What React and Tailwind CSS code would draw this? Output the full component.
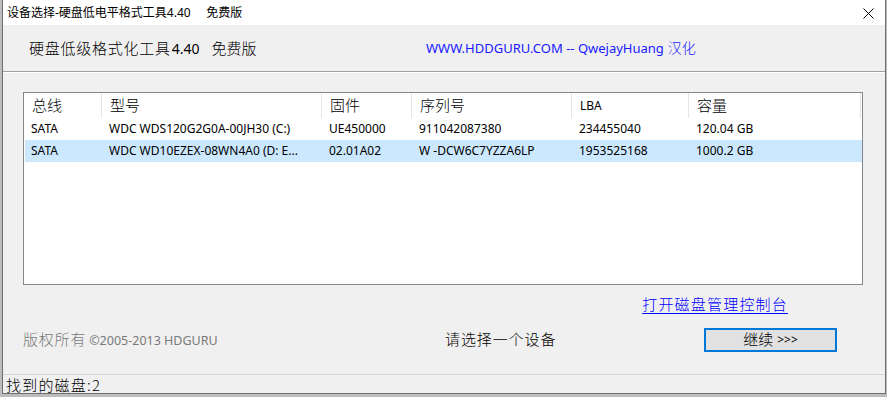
import React from "react";

const CJK = { fontFamily: "'Noto Sans CJK SC', sans-serif", fontWeight: 300 };
const LAT = { fontFamily: "'Noto Sans', 'Noto Sans CJK SC', sans-serif" };

const cols = [
  { w: 78, h: "总线", cjk: true },
  { w: 220, h: "型号", cjk: true },
  { w: 90, h: "固件", cjk: true },
  { w: 160, h: "序列号", cjk: true },
  { w: 117, h: "LBA", cjk: false },
  { w: 172, h: "容量", cjk: true },
];

const rows = [
  ["SATA", "WDC WDS120G2G0A-00JH30 (C:)", "UE450000", "911042087380", "234455040", "120.04 GB"],
  ["SATA", "WDC WD10EZEX-08WN4A0 (D: E...", "02.01A02", "W -DCW6C7YZZA6LP", "1953525168", "1000.2 GB"],
];

export default function App() {
  return (
    <div className="w-[887px] h-[397px] bg-[#bdbdbd] overflow-hidden pl-[2px]">
      <div className="w-[884px] h-[394px] flex flex-col border-x border-b border-[#6e6e6e] bg-[#f0f0f0]">
        {/* title bar */}
        <div className="h-[25px] bg-white flex items-center justify-between pl-[4px] pr-[11px] shrink-0">
          <div className="text-[12px] text-black whitespace-pre leading-none" style={LAT}>
            设备选择-硬盘低电平格式工具4.40     免费版
          </div>
          <svg width="11" height="11" viewBox="0 0 11 11" className="mt-[1px]">
            <path d="M0.5 0.5 L10.5 10.5 M10.5 0.5 L0.5 10.5" stroke="#000" strokeWidth="1" />
          </svg>
        </div>
        {/* heading */}
        <div className="h-[46px] flex items-center pl-[26px] shrink-0">
          <div className="flex items-baseline w-[397px]">
            <span className="text-[15px] tracking-[0.75px] text-black" style={CJK}>硬盘低级格式化工具</span>
            <span className="text-[14px] text-black ml-[1px]" style={LAT}>4.40</span>
            <span className="text-[15px] text-black ml-[12px]" style={CJK}>免费版</span>
          </div>
          <div className="flex items-baseline text-[#1a1aff]">
            <span className="text-[13px]" style={LAT}>WWW.HDDGURU.COM -- QwejayHuang</span>
            <span className="text-[14px] ml-[4px]" style={CJK}>汉化</span>
          </div>
        </div>
        <div className="h-[1px] bg-[#a0a0a0] shrink-0" />
        <div className="h-[1px] bg-white shrink-0" />
        {/* list */}
        <div className="ml-[20px] mt-[19px] w-[840px] h-[193px] border border-[#828790] bg-white shrink-0">
          <div className="flex h-[25px]">
            {cols.map((c, i) => (
              <div
                key={i}
                className="h-full flex items-center pl-[8px] border-r border-[#e5e5e5] text-black"
                style={{ width: c.w }}
              >
                {c.cjk ? (
                  <span className="text-[15px]" style={CJK}>{c.h}</span>
                ) : (
                  <span className="text-[12px]" style={LAT}>{c.h}</span>
                )}
              </div>
            ))}
          </div>
          {rows.map((r, ri) => (
            <div key={ri} className={"flex h-[22px] " + (ri === 1 ? "bg-[#cce8ff] ml-[1px]" : "")}>
              {r.map((t, ci) => (
                <div
                  key={ci}
                  className="h-full flex items-center text-[12px] text-black whitespace-nowrap overflow-hidden"
                  style={{ ...LAT, width: ri === 1 && ci === 0 ? cols[ci].w - 1 : cols[ci].w, paddingLeft: ci === 0 ? (ri === 1 ? 6 : 7) : 7 }}
                >
                  {t}
                </div>
              ))}
            </div>
          ))}
        </div>
        {/* link row */}
        <div className="h-[38px] flex items-center justify-end pr-[97px] shrink-0">
          <span className="text-[15px] tracking-[1.2px] text-[#0000ff] underline underline-offset-[3px]" style={CJK}>
            打开磁盘管理控制台
          </span>
        </div>
        {/* bottom row */}
        <div className="h-[33px] flex items-center pl-[20px] shrink-0">
          <div className="w-[422px] flex items-baseline text-[#7a7a7a]">
            <span className="text-[15px] tracking-[0.8px]" style={CJK}>版权所有</span>
            <span className="text-[12.5px] ml-[3px]" style={LAT}>©2005-2013 HDGURU</span>
          </div>
          <span className="text-[15px] tracking-[0.9px] text-black w-[259px]" style={CJK}>请选择一个设备</span>
          <div className="w-[133px] h-[24px] border-2 border-[#0078d7] bg-[#e1e1e1] flex items-center justify-center">
            <span className="text-[15px] text-black" style={CJK}>继续</span>
            <span className="text-[12px] text-black ml-[4px]" style={LAT}>&gt;&gt;&gt;</span>
          </div>
        </div>
        <div className="flex-1" />
        {/* status bar */}
        <div className="h-[19px] border-t border-[#d7d7d7] flex items-center pl-[3px] shrink-0">
          <span className="text-[15px] tracking-[1.2px] text-black leading-none" style={CJK}>找到的磁盘:2</span>
        </div>
      </div>
    </div>
  );
}
